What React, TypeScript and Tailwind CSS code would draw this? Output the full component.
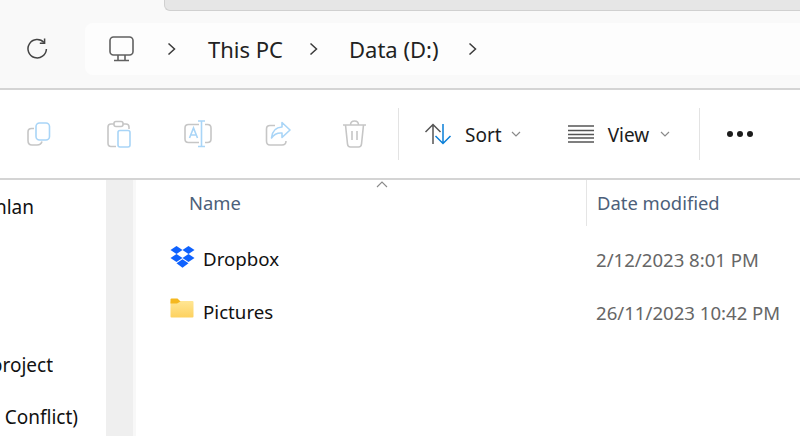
const font = "font-['Noto_Sans','Open_Sans',sans-serif]";

function Chevron() {
  return (
    <svg width="10" height="14" viewBox="0 0 10 14" fill="none" stroke="#3a3a3a" strokeWidth="1.5">
      <path d="M1.5 1.5 L7.5 7 L1.5 12.5" />
    </svg>
  );
}

function Caret() {
  return (
    <svg width="10" height="7" viewBox="0 0 10 7" fill="none" stroke="#8a8a8a" strokeWidth="1.2">
      <path d="M1 1 L5 5 L9 1" />
    </svg>
  );
}

const G = "#c6c6c6";
const B = "#a9d5f7";

function CopyIcon() {
  return (
    <svg width="24" height="24" viewBox="0 0 24 24" fill="none" strokeWidth="1.6">
      <path d="M7 6.5 H4.5 Q1 6.5 1 10 V18.5 Q1 23 5 23 H10 Q14 23 15 19.5" stroke={G} />
      <rect x="9" y="1" width="13.5" height="17" rx="3.5" stroke={B} />
    </svg>
  );
}

function PasteIcon() {
  return (
    <svg width="24" height="28" viewBox="0 0 24 28" fill="none" strokeWidth="1.6">
      <path d="M7 4 H4 Q1 4 1 7 V23 Q1 26.5 4 26.5 H9 M22 9 V7 Q22 4 19 4 H16" stroke={G} />
      <rect x="7" y="1.5" width="9" height="5" rx="2" stroke={G} />
      <rect x="11" y="10.5" width="12" height="16.5" rx="2" stroke={B} />
    </svg>
  );
}

function RenameIcon() {
  return (
    <svg width="28" height="28" viewBox="0 0 28 28" fill="none" strokeWidth="1.6">
      <path d="M15 4.5 H4.5 Q1 4.5 1 8 V19 Q1 22.5 4.5 22.5 H15 M21 4.5 H23.5 Q27 4.5 27 8 V19 Q27 22.5 23.5 22.5 H21" stroke={G} />
      <path d="M14 1 H21 M17.5 1 V26.5 M14 26.5 H21" stroke={B} />
      <path d="M5.5 18 L9.5 8 L13.5 18 M7 15 H12" stroke={B} />
    </svg>
  );
}

function ShareIcon() {
  return (
    <svg width="26" height="26" viewBox="0 0 26 26" fill="none" strokeWidth="1.6">
      <path d="M10 4.5 H5 Q1.5 4.5 1.5 8 V20 Q1.5 24 5 24 H17 Q21 24 21 20" stroke={G} />
      <path d="M17 1.5 L25 9 L17 16.5 V12 Q10 11.5 6.5 17 Q7.5 6.5 17 6 Z" stroke={B} strokeLinejoin="round" />
    </svg>
  );
}

function TrashIcon() {
  return (
    <svg width="25" height="28" viewBox="0 0 25 28" fill="none" strokeWidth="1.6" stroke={G}>
      <path d="M1 5 H24 M8.5 5 Q8.5 1 12.5 1 Q16.5 1 16.5 5" />
      <path d="M3.5 5 L5.5 24 Q5.8 27 8.5 27 H16.5 Q19.2 27 19.5 24 L21.5 5" />
      <path d="M10 11 V20 M15 11 V20" />
    </svg>
  );
}

function SortIcon() {
  return (
    <svg width="28" height="22" viewBox="0 0 28 22" fill="none" strokeWidth="1.5">
      <path d="M9 21 V1.5 M1.5 9 L9 1.5 L16.5 9" stroke="#555555" />
      <path d="M19 1 V20.5 M11.5 13 L19 20.5 L26.5 13" stroke="#0a7fd8" />
    </svg>
  );
}

function ViewIcon() {
  return (
    <svg width="26" height="18" viewBox="0 0 26 18" fill="none" strokeWidth="1.5" stroke="#555555">
      <path d="M0 1 H26 M0 5.5 H26 M0 9.5 H26 M0 13 H26 M0 17 H26" />
    </svg>
  );
}

function Dropbox() {
  return (
    <svg width="25" height="23" viewBox="0 0 25 23" fill="#0f62fe">
      <path d="M6.5 0 L12.5 4 L6.5 8 L0.5 4 Z" />
      <path d="M18.5 0 L24.5 4 L18.5 8 L12.5 4 Z" />
      <path d="M6.5 8 L12.5 12 L6.5 16 L0.5 12 Z" />
      <path d="M18.5 8 L24.5 12 L18.5 16 L12.5 12 Z" />
      <path d="M6.5 17.3 L12.5 13.3 L18.5 17.3 L12.5 21.8 Z" />
    </svg>
  );
}

function Folder() {
  return (
    <svg width="24" height="20" viewBox="0 0 24 20">
      <defs>
        <linearGradient id="fg" x1="0" y1="0" x2="0" y2="1">
          <stop offset="0" stopColor="#ffe694" />
          <stop offset="1" stopColor="#fdd15f" />
        </linearGradient>
      </defs>
      <rect x="0.5" y="3" width="23" height="16.5" rx="1" fill="url(#fg)" />
      <path d="M0.5 5.5 V1.5 Q0.5 0.5 1.5 0.5 H7.5 L10.5 3.5 L7 5.5 Z" fill="#f5b81f" />
    </svg>
  );
}

function SideItem({ text, w }: { text: string; w: string }) {
  return (
    <div className={`${w} flex justify-end overflow-hidden whitespace-nowrap text-[19px] leading-[26px] text-[#111111]`}>
      {text}
    </div>
  );
}

function FileRow({ icon, name, date, lift }: { icon: React.ReactNode; name: string; date: string; lift: string }) {
  return (
    <div className="flex h-[53px] items-center">
      <div className={`flex w-[67px] items-center pl-[34px] ${lift}`}>{icon}</div>
      <div className="w-[393px] text-[18.7px] text-[#111111]">{name}</div>
      <div className="whitespace-nowrap text-[18.6px] text-[#666666]">{date}</div>
    </div>
  );
}

export default function App() {
  return (
    <div className={`${font} flex h-[436px] w-[800px] flex-col overflow-hidden bg-white`}>
      {/* address bar */}
      <div className="h-[90px] shrink-0 border-b-2 border-[#d4d4d4] bg-[#f9f9f9]">
        <div className="ml-[164px] h-[11px] rounded-bl-[6px] border-b border-l border-[#d0d0d0] bg-[#e6e6e6]" />
        <div className="mt-[12px] flex items-center">
          <div className="flex w-[73px] justify-center">
            <svg width="22" height="22" viewBox="0 0 22 22" fill="none" stroke="#444444" strokeWidth="1.5">
              <path d="M18 4.5 A9.2 9.2 0 1 0 20.4 11" />
              <path d="M18.6 0.5 V5.2 H13.8" />
            </svg>
          </div>
          <div className="ml-[12px] flex h-[52px] flex-1 items-center rounded-l-[8px] bg-[#fdfdfd] pl-[24px]">
            <svg width="26" height="26" viewBox="0 0 26 26" fill="none" stroke="#606060" strokeWidth="1.6">
              <rect x="1" y="1" width="23" height="18" rx="3.5" />
              <path d="M9 19 V24 M16 19 V24 M5 24.5 H20" />
            </svg>
            <div className="ml-[32px]"><Chevron /></div>
            <div className="ml-[31px] text-[22px] text-[#222222]">This PC</div>
            <div className="ml-[26px]"><Chevron /></div>
            <div className="ml-[30px] text-[22px] text-[#222222]">Data (D:)</div>
            <div className="ml-[29px]"><Chevron /></div>
          </div>
        </div>
      </div>

      {/* command bar */}
      <div className="flex h-[90px] shrink-0 items-center border-b-2 border-[#d4d4d4] bg-white pl-[27px]">
        <CopyIcon />
        <div className="ml-[56px]"><PasteIcon /></div>
        <div className="ml-[53px]"><RenameIcon /></div>
        <div className="ml-[53px]"><ShareIcon /></div>
        <div className="ml-[51px]"><TrashIcon /></div>
        <div className="ml-[31px] h-[52px] w-px bg-[#e3e3e3]" />
        <div className="ml-[25px]"><SortIcon /></div>
        <div className="ml-[13px] mt-[2px] text-[19px] text-[#1c1c1c]">Sort</div>
        <div className="ml-[9px]"><Caret /></div>
        <div className="ml-[47px]"><ViewIcon /></div>
        <div className="ml-[14px] mt-[2px] text-[19px] text-[#1c1c1c]">View</div>
        <div className="ml-[11px]"><Caret /></div>
        <div className="ml-[29px] h-[52px] w-px bg-[#e3e3e3]" />
        <div className="ml-[27px] flex gap-[4px]">
          <div className="h-[6px] w-[6px] rounded-full bg-[#1c1c1c]" />
          <div className="h-[6px] w-[6px] rounded-full bg-[#1c1c1c]" />
          <div className="h-[6px] w-[6px] rounded-full bg-[#1c1c1c]" />
        </div>
      </div>

      {/* body */}
      <div className="flex flex-1">
        <div className="w-[106px] shrink-0 bg-white pt-[14px]">
          <SideItem text="Lachlan" w="w-[34px]" />
          <div className="mt-[132px]"><SideItem text="project" w="w-[53px]" /></div>
          <div className="mt-[26px]"><SideItem text="Conflict)" w="w-[78px]" /></div>
        </div>
        <div className="w-[27px] shrink-0 bg-[#efefef]" />
        <div className="w-[3px] shrink-0 bg-[#f8f8f8]" />
        <div className="relative flex-1">
          <svg className="absolute left-[240px] top-[1px]" width="12" height="7" viewBox="0 0 12 7" fill="none" stroke="#8a8a8a" strokeWidth="1.1">
            <path d="M1 6 L6 1 L11 6" />
          </svg>
          <div className="flex h-[46px] items-center text-[18.4px] text-[#4c607a]">
            <div className="w-[450px] pl-[53px]">Name</div>
            <div className="flex h-full items-center border-l border-[#e5e5e5] pl-[10px] whitespace-nowrap">Date modified</div>
          </div>
          <div className="pt-[7px]">
            <FileRow icon={<Dropbox />} name="Dropbox" date="2/12/2023 8:01 PM" lift="-mt-[4px]" />
            <FileRow icon={<Folder />} name="Pictures" date="26/11/2023 10:42 PM" lift="-mt-[9px]" />
          </div>
        </div>
      </div>
    </div>
  );
}
